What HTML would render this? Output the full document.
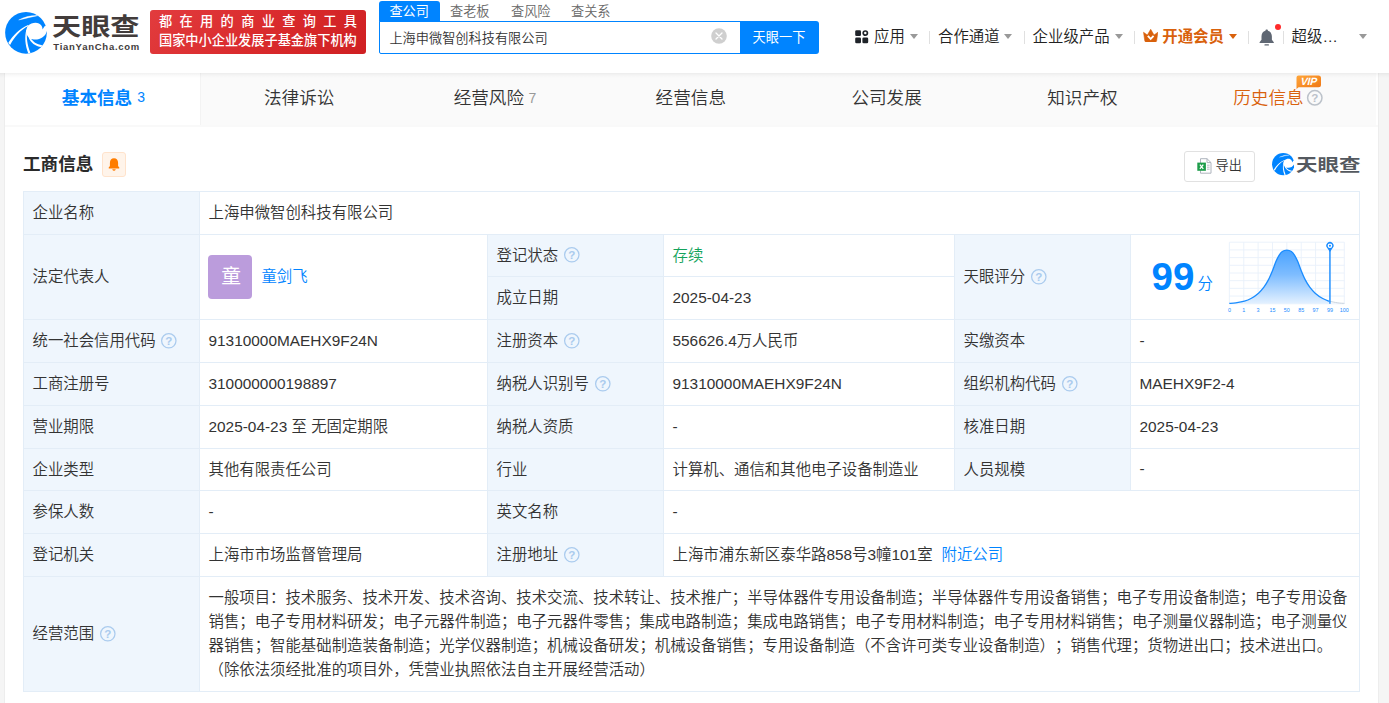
<!DOCTYPE html>
<html lang="zh-CN">
<head>
<meta charset="utf-8">
<title>上海申微智创科技有限公司 - 天眼查</title>
<style>
html,body{margin:0;padding:0}
body{width:1389px;height:703px;overflow:hidden;background:#f5f5f5;position:relative;font-family:"Liberation Sans","Noto Sans CJK SC",sans-serif;color:#333;font-size:15.4px;font-weight:350}
.a{position:absolute;display:block}
.t{white-space:nowrap;margin:0;text-spacing-trim:space-all}
b{font-weight:700}
.l{position:relative;top:-0.4px}
</style>
</head>
<body>

<div class="a " style="left:4px;top:73px;width:1373px;height:630px;background:#fff;border-left:1px solid #ededed;border-right:1px solid #ededed"></div>
<div class="a " style="left:0px;top:0px;width:1389px;height:73px;background:#fff;z-index:5"></div>
<div class="a " style="left:0px;top:73px;width:1389px;height:5px;background:linear-gradient(rgba(0,0,0,.055),rgba(0,0,0,.02) 50%,rgba(0,0,0,0));z-index:5"></div>
<div class="a" style="left:0;top:0;width:1389px;height:73px;z-index:6">
<svg class="a" style="left:4.95px;top:11.5px" width="42.1" height="42.1" viewBox="42 50 592 592"><circle cx="337" cy="343" r="293" fill="#0084ff"/><path d="M365,242 C420,192 520,182 556,245 C566,265 571,280 570,296 L598,250 L665,235 L665,324 L630,320 C612,400 520,452 430,434 C405,428 392,422 383,415 C345,385 335,330 345,290 C350,270 355,255 365,242 Z" fill="#fff"/><path d="M235,162 C320,116 420,96 502,101 C420,116 330,142 235,162 Z" fill="#fff" stroke="#fff" stroke-width="5" stroke-linejoin="round"/><path d="M88,486 C150,383 250,283 366,234 L370,248 C262,302 172,402 114,514 Z" fill="#fff"/><path d="M342,300 C316,400 323,512 370,634 L400,622 C352,510 342,400 354,300 Z" fill="#fff"/><path d="M374,405 C400,482 470,532 553,543 L564,516 C490,505 430,470 397,405 Z" fill="#fff"/></svg>
<div class="a t " style="left:52.3px;top:11.8px;font-size:24.2px;line-height:30px;height:30px;color:#423c3b;font-weight:700;transform:scaleX(1.206);transform-origin:0 50%;letter-spacing:0px">天眼查</div>
<div class="a t " style="left:53.3px;top:41.0px;font-size:9.5px;line-height:12px;height:12px;color:#423c3b;font-weight:700;letter-spacing:0.74px">TianYanCha.com</div>
<div class="a " style="left:150px;top:10px;width:216px;height:44px;background:linear-gradient(135deg,#e23c3e 0%,#d92a2c 55%,#cf1f22 100%);border-radius:3px"></div>
<div class="a t " style="left:159px;top:13.4px;font-size:13.2px;line-height:18px;height:18px;color:#fff;font-weight:500;letter-spacing:7.35px">都在用的商业查询工具</div>
<div class="a t " style="left:159px;top:31.8px;font-size:13.2px;line-height:18px;height:18px;color:#fff;font-weight:500;">国家中小企业发展子基金旗下机构</div>
<div class="a " style="left:379px;top:1px;width:61px;height:21px;background:#0084ff;border-radius:3px 3px 0 0"></div>
<div class="a t " style="left:389.4px;top:2.5px;font-size:13.2px;line-height:18px;height:18px;color:#fff;font-weight:400;">查公司</div>
<div class="a t " style="left:450px;top:2.5px;font-size:13.2px;line-height:18px;height:18px;color:#666;font-weight:350;">查老板</div>
<div class="a t " style="left:511px;top:2.5px;font-size:13.2px;line-height:18px;height:18px;color:#666;font-weight:350;">查风险</div>
<div class="a t " style="left:571px;top:2.5px;font-size:13.2px;line-height:18px;height:18px;color:#666;font-weight:350;">查关系</div>
<div class="a " style="left:379px;top:21px;width:362px;height:33px;box-sizing:border-box;border:1px solid #0084ff;background:#fff;border-radius:0 0 0 2px"></div>
<div class="a t " style="left:389.4px;top:29.5px;font-size:13.2px;line-height:18px;height:18px;color:#333;font-weight:350;">上海申微智创科技有限公司</div>
<svg class="a" style="left:710.8px;top:27.9px" width="16" height="16" viewBox="0 0 16 16"><circle cx="8" cy="8" r="7.8" fill="#cfcfcf"/><path d="M5,5 L11,11 M11,5 L5,11" stroke="#fff" stroke-width="1.3" stroke-linecap="round"/></svg>
<div class="a " style="left:740px;top:21px;width:79px;height:33px;background:#0084ff;border-radius:0 3px 3px 0"></div>
<div class="a t " style="left:752.6px;top:29.1px;font-size:13.2px;line-height:18px;height:18px;color:#fff;font-weight:400;">天眼一下</div>
<svg class="a" style="left:855px;top:30px" width="14" height="14" viewBox="0 0 14 14"><rect x="0.2" y="0.2" width="5.8" height="5.8" rx="1.3" fill="#1f2329"/><rect x="0.2" y="7.4" width="5.8" height="5.8" rx="1.3" fill="#1f2329"/><rect x="7.4" y="7.4" width="5.8" height="5.8" rx="1.3" fill="#1f2329"/><circle cx="10.3" cy="3.1" r="2.1" fill="none" stroke="#1f2329" stroke-width="1.7"/></svg>
<div class="a t " style="left:874px;top:25.25px;font-size:15.4px;line-height:23.1px;height:23.1px;color:#222;font-weight:350;">应用</div>
<svg class="a" style="left:910px;top:33.9px" width="8" height="5" viewBox="0 0 8 5"><path d="M0,0 H8 L4.0,5 Z" fill="#999"/></svg>
<div class="a " style="left:929px;top:31px;width:1px;height:13px;background:#e0e0e0"></div>
<div class="a t " style="left:938px;top:25.25px;font-size:15.4px;line-height:23.1px;height:23.1px;color:#222;font-weight:350;">合作通道</div>
<svg class="a" style="left:1004.4px;top:33.9px" width="8" height="5" viewBox="0 0 8 5"><path d="M0,0 H8 L4.0,5 Z" fill="#999"/></svg>
<div class="a " style="left:1024px;top:31px;width:1px;height:13px;background:#e0e0e0"></div>
<div class="a t " style="left:1032.6px;top:25.25px;font-size:15.4px;line-height:23.1px;height:23.1px;color:#222;font-weight:350;">企业级产品</div>
<svg class="a" style="left:1114.6px;top:33.9px" width="8" height="5" viewBox="0 0 8 5"><path d="M0,0 H8 L4.0,5 Z" fill="#999"/></svg>
<div class="a " style="left:1134px;top:31px;width:1px;height:13px;background:#e0e0e0"></div>
<svg class="a" style="left:1142.8px;top:29px" width="15.4" height="13.4" viewBox="0 0 16 14"><path d="M0.5,3.4 L4.5,6.3 L8,0.3 L11.5,6.3 L15.5,3.4 L14.2,12.2 Q14,13.6 12.7,13.6 H3.3 Q2,13.6 1.8,12.2 Z" fill="#d9610c" stroke="#d9610c" stroke-width="0.6" stroke-linejoin="round"/><path d="M5,7.2 L8,10.4 L11,7.2" fill="none" stroke="#fff" stroke-width="1.9"/></svg>
<div class="a t " style="left:1162.3px;top:25.25px;font-size:15.4px;line-height:23.1px;height:23.1px;color:#d9610c;font-weight:700;">开通会员</div>
<svg class="a" style="left:1229.3px;top:33.9px" width="8" height="5" viewBox="0 0 8 5"><path d="M0,0 H8 L4.0,5 Z" fill="#d9610c"/></svg>
<div class="a " style="left:1248px;top:31px;width:1px;height:13px;background:#e0e0e0"></div>
<svg class="a" style="left:1258.7px;top:28.8px" width="15.4" height="17.6" viewBox="0 0 16 19" preserveAspectRatio="none"><path d="M8,0.6 C8.8,0.6 9.3,1.2 9.3,2 C12,2.8 13.4,5.2 13.4,8 V11.6 L15.4,14.2 V15 H0.6 V14.2 L2.6,11.6 V8 C2.6,5.2 4,2.8 6.7,2 C6.7,1.2 7.2,0.6 8,0.6 Z" fill="#5f6773"/><rect x="5.6" y="16.4" width="4.8" height="1.5" rx="0.7" fill="#5f6773"/></svg>
<div class="a " style="left:1274.8px;top:24.3px;width:6.2px;height:6.2px;background:#ff2b2b;border-radius:50%"></div>
<div class="a " style="left:1283px;top:31px;width:1px;height:13px;background:#e0e0e0"></div>
<div class="a t " style="left:1291.6px;top:25.25px;font-size:15.4px;line-height:23.1px;height:23.1px;color:#222;font-weight:350;">超级…</div>
<svg class="a" style="left:1358.8px;top:33.9px" width="8" height="5" viewBox="0 0 8 5"><path d="M0,0 H8 L4.0,5 Z" fill="#999"/></svg>
</div>
<div class="a " style="left:5px;top:73px;width:1371px;height:52px;background:#fafafa"></div>
<div class="a " style="left:5px;top:125px;width:1373px;height:2px;background:#f9f9f9"></div>
<div class="a " style="left:5px;top:73px;width:196px;height:52px;background:#fff;border-right:1px solid #f3f3f3;box-sizing:border-box"></div>
<div class="a t" style="left:-46.599999999999994px;width:300px;text-align:center;top:85.2px;font-size:17.6px;line-height:26.4px;height:26.4px;color:#0084ff;font-weight:700;"><b>基本信息</b><span style="font-size:14px;font-weight:400;margin-left:5px;position:relative;top:-2.6px">3</span></div>
<div class="a t" style="left:149.20000000000005px;width:300px;text-align:center;top:85.2px;font-size:17.6px;line-height:26.4px;height:26.4px;color:#333;font-weight:350;">法律诉讼</div>
<div class="a t" style="left:345.0px;width:300px;text-align:center;top:85.2px;font-size:17.6px;line-height:26.4px;height:26.4px;color:#333;font-weight:350;">经营风险<span style="font-size:14px;margin-left:4.5px;color:#999;position:relative;top:-1px">7</span></div>
<div class="a t" style="left:540.8000000000001px;width:300px;text-align:center;top:85.2px;font-size:17.6px;line-height:26.4px;height:26.4px;color:#333;font-weight:350;">经营信息</div>
<div class="a t" style="left:736.6px;width:300px;text-align:center;top:85.2px;font-size:17.6px;line-height:26.4px;height:26.4px;color:#333;font-weight:350;">公司发展</div>
<div class="a t" style="left:932.4000000000001px;width:300px;text-align:center;top:85.2px;font-size:17.6px;line-height:26.4px;height:26.4px;color:#333;font-weight:350;">知识产权</div>
<div class="a t " style="left:1233.2px;top:85.2px;font-size:17.6px;line-height:26.4px;height:26.4px;color:#d9610c;font-weight:350;">历史信息</div>
<svg class="a" style="left:1306.4px;top:88.8px" width="17.6" height="17.6" viewBox="0 0 17.6 17.6"><circle cx="8.8" cy="8.8" r="7.2" fill="none" stroke="#bcc2ca" stroke-width="1.5"/><text x="8.8" y="12.9" font-size="11.6" font-weight="700" text-anchor="middle" fill="#bcc2ca" font-family="Liberation Sans, sans-serif">?</text></svg>
<svg class="a" style="left:1295.6px;top:74.5px;z-index:7" width="26" height="16" viewBox="0 0 26 16"><defs><linearGradient id="vg" x1="0" y1="0" x2="1" y2="1"><stop offset="0" stop-color="#ffa63a"/><stop offset="1" stop-color="#ee7413"/></linearGradient></defs><path d="M2.5,0.5 H22.5 Q25,0.5 25,3 V9.8 Q25,12.3 22.5,12.3 H2.6 L0.5,14 V2.5 Q0.5,0.5 2.5,0.5 Z" fill="url(#vg)"/><text x="14.6" y="10.1" font-size="10.4" font-weight="700" text-anchor="middle" fill="#fff" font-family="Liberation Sans, sans-serif" letter-spacing="-0.2" transform="skewX(-14)">VIP</text></svg>
<div class="a t " style="left:23px;top:150.5px;font-size:17.6px;line-height:26.4px;height:26.4px;color:#2a2a2a;font-weight:700;">工商信息</div>
<div class="a " style="left:102px;top:152px;width:24px;height:25px;box-sizing:border-box;border:1px solid #ffe3cc;background:#fff4ea;border-radius:3px"></div>
<svg class="a" style="left:107.8px;top:157.6px" width="12" height="13" viewBox="0 0 12 13"><path d="M6,0.3 C8.6,0.3 10.1,2.3 10.1,5 V8 L11.4,9.8 Q11.6,10.6 10.8,10.6 H1.2 Q0.4,10.6 0.6,9.8 L1.9,8 V5 C1.9,2.3 3.4,0.3 6,0.3 Z" fill="#ff7d00"/><path d="M4.2,11.2 H7.8 Q7.2,12.7 6,12.7 Q4.8,12.7 4.2,11.2 Z" fill="#ff7d00"/></svg>
<div class="a " style="left:1184px;top:151px;width:71px;height:31px;box-sizing:border-box;border:1px solid #e1e1e1;border-radius:3px;background:#fff"></div>
<svg class="a" style="left:1196.6px;top:157.9px" width="15" height="16" viewBox="0 0 15 16"><path d="M3.5,0.7 H10 L14,4.6 V15.2 H3.5 Z" fill="#fff" stroke="#aeb4bd" stroke-width="1"/><path d="M10,0.7 V4.6 H14" fill="none" stroke="#aeb4bd" stroke-width="1"/><path d="M10,7.2 H12.6 M10,9.2 H12.6 M10,11.2 H12.6" stroke="#aeb4bd" stroke-width="0.9"/><rect x="0.3" y="4.6" width="8.6" height="8.2" fill="#1e9d4b"/><path d="M2.9,6.6 L6.3,10.8 M6.3,6.6 L2.9,10.8" stroke="#fff" stroke-width="1.3"/></svg>
<div class="a t " style="left:1215.6px;top:157.1px;font-size:13.2px;line-height:18px;height:18px;color:#333;font-weight:350;">导出</div>
<svg class="a" style="left:1271.6px;top:153px" width="22.6" height="22.6" viewBox="42 50 592 592"><circle cx="337" cy="343" r="293" fill="#0084ff"/><path d="M365,242 C420,192 520,182 556,245 C566,265 571,280 570,296 L598,250 L665,235 L665,324 L630,320 C612,400 520,452 430,434 C405,428 392,422 383,415 C345,385 335,330 345,290 C350,270 355,255 365,242 Z" fill="#fff"/><path d="M235,162 C320,116 420,96 502,101 C420,116 330,142 235,162 Z" fill="#fff" stroke="#fff" stroke-width="5" stroke-linejoin="round"/><path d="M88,486 C150,383 250,283 366,234 L370,248 C262,302 172,402 114,514 Z" fill="#fff"/><path d="M342,300 C316,400 323,512 370,634 L400,622 C352,510 342,400 354,300 Z" fill="#fff"/><path d="M374,405 C400,482 470,532 553,543 L564,516 C490,505 430,470 397,405 Z" fill="#fff"/></svg>
<div class="a t " style="left:1296.2px;top:153.2px;font-size:17.4px;line-height:24px;height:24px;color:#54595f;font-weight:700;transform:scaleX(1.235);transform-origin:0 50%">天眼查</div>
<div class="a " style="left:24px;top:192px;width:175px;height:499px;background:#eff6fd"></div>
<div class="a " style="left:488px;top:235px;width:175px;height:341px;background:#eff6fd"></div>
<div class="a " style="left:955px;top:235px;width:175px;height:255px;background:#eff6fd"></div>
<div class="a " style="left:23px;top:191px;width:1337px;height:1px;background:#e3edf7"></div>
<div class="a " style="left:23px;top:234px;width:1337px;height:1px;background:#e3edf7"></div>
<div class="a " style="left:23px;top:319px;width:1337px;height:1px;background:#e3edf7"></div>
<div class="a " style="left:23px;top:362px;width:1337px;height:1px;background:#e3edf7"></div>
<div class="a " style="left:23px;top:405px;width:1337px;height:1px;background:#e3edf7"></div>
<div class="a " style="left:23px;top:448px;width:1337px;height:1px;background:#e3edf7"></div>
<div class="a " style="left:23px;top:490px;width:1337px;height:1px;background:#e3edf7"></div>
<div class="a " style="left:23px;top:533px;width:1337px;height:1px;background:#e3edf7"></div>
<div class="a " style="left:23px;top:576px;width:1337px;height:1px;background:#e3edf7"></div>
<div class="a " style="left:23px;top:691px;width:1337px;height:1px;background:#e3edf7"></div>
<div class="a " style="left:487px;top:276px;width:467px;height:1px;background:#e3edf7"></div>
<div class="a " style="left:23px;top:191px;width:1px;height:501px;background:#e3edf7"></div>
<div class="a " style="left:199px;top:191px;width:1px;height:501px;background:#e3edf7"></div>
<div class="a " style="left:1359px;top:191px;width:1px;height:501px;background:#e3edf7"></div>
<div class="a " style="left:487px;top:234px;width:1px;height:342px;background:#e3edf7"></div>
<div class="a " style="left:663px;top:234px;width:1px;height:342px;background:#e3edf7"></div>
<div class="a " style="left:954px;top:234px;width:1px;height:256px;background:#e3edf7"></div>
<div class="a " style="left:1130px;top:234px;width:1px;height:256px;background:#e3edf7"></div>
<div class="a t " style="left:32.5px;top:201.25px;font-size:15.4px;line-height:23.1px;height:23.1px;color:#333;font-weight:350;">企业名称</div>
<div class="a t " style="left:208.5px;top:201.25px;font-size:15.4px;line-height:23.1px;height:23.1px;color:#333;font-weight:350;">上海申微智创科技有限公司</div>
<div class="a t " style="left:32.5px;top:265.25px;font-size:15.4px;line-height:23.1px;height:23.1px;color:#333;font-weight:350;">法定代表人</div>
<div class="a " style="left:208px;top:255px;width:44px;height:44px;background:#bb9cdc;border-radius:4px"></div>
<div class="a t" style="left:209.1px;width:44px;text-align:center;top:261.95px;font-size:19.8px;line-height:29.7px;height:29.7px;color:#fff;font-weight:400;">童</div>
<div class="a t " style="left:261.4px;top:265.25px;font-size:15.4px;line-height:23.1px;height:23.1px;color:#0084ff;font-weight:350;">童剑飞</div>
<div class="a t " style="left:496.5px;top:243.55px;font-size:15.4px;line-height:23.1px;height:23.1px;color:#333;font-weight:350;">登记状态</div>
<svg class="a" style="left:562.7px;top:246.1px" width="17.6" height="17.6" viewBox="0 0 17.6 17.6"><circle cx="8.8" cy="8.8" r="7.2" fill="none" stroke="#aacbee" stroke-width="1.25"/><text x="8.8" y="12.9" font-size="11.6" font-weight="700" text-anchor="middle" fill="#aacbee" font-family="Liberation Sans, sans-serif">?</text></svg>
<div class="a t " style="left:672.5px;top:243.55px;font-size:15.4px;line-height:23.1px;height:23.1px;color:#14a35c;font-weight:350;">存续</div>
<div class="a t " style="left:496.5px;top:286.35px;font-size:15.4px;line-height:23.1px;height:23.1px;color:#333;font-weight:350;">成立日期</div>
<div class="a t " style="left:672.5px;top:286.35px;font-size:15.4px;line-height:23.1px;height:23.1px;color:#333;font-weight:350;"><span class="l">2025-04-23</span></div>
<div class="a t " style="left:963.5px;top:265.25px;font-size:15.4px;line-height:23.1px;height:23.1px;color:#333;font-weight:350;">天眼评分</div>
<svg class="a" style="left:1029.7px;top:267.8px" width="17.6" height="17.6" viewBox="0 0 17.6 17.6"><circle cx="8.8" cy="8.8" r="7.2" fill="none" stroke="#aacbee" stroke-width="1.25"/><text x="8.8" y="12.9" font-size="11.6" font-weight="700" text-anchor="middle" fill="#aacbee" font-family="Liberation Sans, sans-serif">?</text></svg>
<div class="a t " style="left:32.5px;top:329.25px;font-size:15.4px;line-height:23.1px;height:23.1px;color:#333;font-weight:350;">统一社会信用代码</div>
<svg class="a" style="left:160.29999999999998px;top:331.8px" width="17.6" height="17.6" viewBox="0 0 17.6 17.6"><circle cx="8.8" cy="8.8" r="7.2" fill="none" stroke="#aacbee" stroke-width="1.25"/><text x="8.8" y="12.9" font-size="11.6" font-weight="700" text-anchor="middle" fill="#aacbee" font-family="Liberation Sans, sans-serif">?</text></svg>
<div class="a t " style="left:208.5px;top:329.25px;font-size:15.4px;line-height:23.1px;height:23.1px;color:#333;font-weight:350;"><span class="l">91310000MAEHX9F24N</span></div>
<div class="a t " style="left:496.5px;top:329.25px;font-size:15.4px;line-height:23.1px;height:23.1px;color:#333;font-weight:350;">注册资本</div>
<svg class="a" style="left:562.7px;top:331.8px" width="17.6" height="17.6" viewBox="0 0 17.6 17.6"><circle cx="8.8" cy="8.8" r="7.2" fill="none" stroke="#aacbee" stroke-width="1.25"/><text x="8.8" y="12.9" font-size="11.6" font-weight="700" text-anchor="middle" fill="#aacbee" font-family="Liberation Sans, sans-serif">?</text></svg>
<div class="a t " style="left:672.5px;top:329.25px;font-size:15.4px;line-height:23.1px;height:23.1px;color:#333;font-weight:350;"><span class="l">556626.4</span>万人民币</div>
<div class="a t " style="left:963.5px;top:329.25px;font-size:15.4px;line-height:23.1px;height:23.1px;color:#333;font-weight:350;">实缴资本</div>
<div class="a t " style="left:1139.5px;top:329.25px;font-size:15.4px;line-height:23.1px;height:23.1px;color:#333;font-weight:350;"><span class="l">-</span></div>
<div class="a t " style="left:32.5px;top:372.25px;font-size:15.4px;line-height:23.1px;height:23.1px;color:#333;font-weight:350;">工商注册号</div>
<div class="a t " style="left:208.5px;top:372.25px;font-size:15.4px;line-height:23.1px;height:23.1px;color:#333;font-weight:350;"><span class="l">310000000198897</span></div>
<div class="a t " style="left:496.5px;top:372.25px;font-size:15.4px;line-height:23.1px;height:23.1px;color:#333;font-weight:350;">纳税人识别号</div>
<svg class="a" style="left:593.5px;top:374.8px" width="17.6" height="17.6" viewBox="0 0 17.6 17.6"><circle cx="8.8" cy="8.8" r="7.2" fill="none" stroke="#aacbee" stroke-width="1.25"/><text x="8.8" y="12.9" font-size="11.6" font-weight="700" text-anchor="middle" fill="#aacbee" font-family="Liberation Sans, sans-serif">?</text></svg>
<div class="a t " style="left:672.5px;top:372.25px;font-size:15.4px;line-height:23.1px;height:23.1px;color:#333;font-weight:350;"><span class="l">91310000MAEHX9F24N</span></div>
<div class="a t " style="left:963.5px;top:372.25px;font-size:15.4px;line-height:23.1px;height:23.1px;color:#333;font-weight:350;">组织机构代码</div>
<svg class="a" style="left:1060.5000000000002px;top:374.8px" width="17.6" height="17.6" viewBox="0 0 17.6 17.6"><circle cx="8.8" cy="8.8" r="7.2" fill="none" stroke="#aacbee" stroke-width="1.25"/><text x="8.8" y="12.9" font-size="11.6" font-weight="700" text-anchor="middle" fill="#aacbee" font-family="Liberation Sans, sans-serif">?</text></svg>
<div class="a t " style="left:1139.5px;top:372.25px;font-size:15.4px;line-height:23.1px;height:23.1px;color:#333;font-weight:350;"><span class="l">MAEHX9F2-4</span></div>
<div class="a t " style="left:32.5px;top:415.25px;font-size:15.4px;line-height:23.1px;height:23.1px;color:#333;font-weight:350;">营业期限</div>
<div class="a t " style="left:208.5px;top:415.25px;font-size:15.4px;line-height:23.1px;height:23.1px;color:#333;font-weight:350;"><span class="l">2025-04-23</span> 至 无固定期限</div>
<div class="a t " style="left:496.5px;top:415.25px;font-size:15.4px;line-height:23.1px;height:23.1px;color:#333;font-weight:350;">纳税人资质</div>
<div class="a t " style="left:672.5px;top:415.25px;font-size:15.4px;line-height:23.1px;height:23.1px;color:#333;font-weight:350;"><span class="l">-</span></div>
<div class="a t " style="left:963.5px;top:415.25px;font-size:15.4px;line-height:23.1px;height:23.1px;color:#333;font-weight:350;">核准日期</div>
<div class="a t " style="left:1139.5px;top:415.25px;font-size:15.4px;line-height:23.1px;height:23.1px;color:#333;font-weight:350;"><span class="l">2025-04-23</span></div>
<div class="a t " style="left:32.5px;top:457.75px;font-size:15.4px;line-height:23.1px;height:23.1px;color:#333;font-weight:350;">企业类型</div>
<div class="a t " style="left:208.5px;top:457.75px;font-size:15.4px;line-height:23.1px;height:23.1px;color:#333;font-weight:350;">其他有限责任公司</div>
<div class="a t " style="left:496.5px;top:457.75px;font-size:15.4px;line-height:23.1px;height:23.1px;color:#333;font-weight:350;">行业</div>
<div class="a t " style="left:672.5px;top:457.75px;font-size:15.4px;line-height:23.1px;height:23.1px;color:#333;font-weight:350;">计算机、通信和其他电子设备制造业</div>
<div class="a t " style="left:963.5px;top:457.75px;font-size:15.4px;line-height:23.1px;height:23.1px;color:#333;font-weight:350;">人员规模</div>
<div class="a t " style="left:1139.5px;top:457.75px;font-size:15.4px;line-height:23.1px;height:23.1px;color:#333;font-weight:350;"><span class="l">-</span></div>
<div class="a t " style="left:32.5px;top:500.25px;font-size:15.4px;line-height:23.1px;height:23.1px;color:#333;font-weight:350;">参保人数</div>
<div class="a t " style="left:208.5px;top:500.25px;font-size:15.4px;line-height:23.1px;height:23.1px;color:#333;font-weight:350;"><span class="l">-</span></div>
<div class="a t " style="left:496.5px;top:500.25px;font-size:15.4px;line-height:23.1px;height:23.1px;color:#333;font-weight:350;">英文名称</div>
<div class="a t " style="left:672.5px;top:500.25px;font-size:15.4px;line-height:23.1px;height:23.1px;color:#333;font-weight:350;"><span class="l">-</span></div>
<div class="a t " style="left:32.5px;top:543.25px;font-size:15.4px;line-height:23.1px;height:23.1px;color:#333;font-weight:350;">登记机关</div>
<div class="a t " style="left:208.5px;top:543.25px;font-size:15.4px;line-height:23.1px;height:23.1px;color:#333;font-weight:350;">上海市市场监督管理局</div>
<div class="a t " style="left:496.5px;top:543.25px;font-size:15.4px;line-height:23.1px;height:23.1px;color:#333;font-weight:350;">注册地址</div>
<svg class="a" style="left:562.7px;top:545.8px" width="17.6" height="17.6" viewBox="0 0 17.6 17.6"><circle cx="8.8" cy="8.8" r="7.2" fill="none" stroke="#aacbee" stroke-width="1.25"/><text x="8.8" y="12.9" font-size="11.6" font-weight="700" text-anchor="middle" fill="#aacbee" font-family="Liberation Sans, sans-serif">?</text></svg>
<div class="a t " style="left:672.5px;top:543.25px;font-size:15.4px;line-height:23.1px;height:23.1px;color:#333;font-weight:350;">上海市浦东新区泰华路<span class="l">858</span>号<span class="l">3</span>幢<span class="l">101</span>室<span style="color:#0084ff;margin-left:9px">附近公司</span></div>
<div class="a t " style="left:32.5px;top:622.25px;font-size:15.4px;line-height:23.1px;height:23.1px;color:#333;font-weight:350;">经营范围</div>
<svg class="a" style="left:98.7px;top:624.8px" width="17.6" height="17.6" viewBox="0 0 17.6 17.6"><circle cx="8.8" cy="8.8" r="7.2" fill="none" stroke="#aacbee" stroke-width="1.25"/><text x="8.8" y="12.9" font-size="11.6" font-weight="700" text-anchor="middle" fill="#aacbee" font-family="Liberation Sans, sans-serif">?</text></svg>
<div class="a t " style="left:208.5px;top:585.6px;font-size:15.4px;line-height:24px;height:24px;color:#333;font-weight:350;">一般项目：技术服务、技术开发、技术咨询、技术交流、技术转让、技术推广；半导体器件专用设备制造；半导体器件专用设备销售；电子专用设备制造；电子专用设备</div>
<div class="a t " style="left:208.5px;top:609.6px;font-size:15.4px;line-height:24px;height:24px;color:#333;font-weight:350;">销售；电子专用材料研发；电子元器件制造；电子元器件零售；集成电路制造；集成电路销售；电子专用材料制造；电子专用材料销售；电子测量仪器制造；电子测量仪</div>
<div class="a t " style="left:208.5px;top:633.6px;font-size:15.4px;line-height:24px;height:24px;color:#333;font-weight:350;">器销售；智能基础制造装备制造；光学仪器制造；机械设备研发；机械设备销售；专用设备制造（不含许可类专业设备制造）；销售代理；货物进出口；技术进出口。</div>
<div class="a t " style="left:208.5px;top:657.6px;font-size:15.4px;line-height:24px;height:24px;color:#333;font-weight:350;">（除依法须经批准的项目外，凭营业执照依法自主开展经营活动）</div>
<div class="a t " style="left:1151.6px;top:254.8px;font-size:38.5px;line-height:44px;height:44px;color:#0084ff;font-weight:700;">99</div>
<div class="a t " style="left:1197.4px;top:272.05px;font-size:15.4px;line-height:23.1px;height:23.1px;color:#0084ff;font-weight:350;">分</div>
<svg class="a" style="left:1225px;top:238px" width="124" height="76" viewBox="1225 238 124 76"><defs><linearGradient id="cg" x1="0" y1="0" x2="0" y2="1"><stop offset="0" stop-color="#4aa3ff"/><stop offset="0.45" stop-color="#7dbcff"/><stop offset="1" stop-color="#e4f1ff"/></linearGradient></defs><path d="M1229.40,242.2 V303.8" stroke="#e9f1fa" stroke-width="0.9"/><path d="M1243.76,242.2 V303.8" stroke="#e9f1fa" stroke-width="0.9"/><path d="M1258.12,242.2 V303.8" stroke="#e9f1fa" stroke-width="0.9"/><path d="M1272.49,242.2 V303.8" stroke="#e9f1fa" stroke-width="0.9"/><path d="M1286.85,242.2 V303.8" stroke="#e9f1fa" stroke-width="0.9"/><path d="M1301.21,242.2 V303.8" stroke="#e9f1fa" stroke-width="0.9"/><path d="M1315.58,242.2 V303.8" stroke="#e9f1fa" stroke-width="0.9"/><path d="M1329.94,242.2 V303.8" stroke="#e9f1fa" stroke-width="0.9"/><path d="M1344.30,242.2 V303.8" stroke="#e9f1fa" stroke-width="0.9"/><path d="M1229.4,242.20 H1344.3" stroke="#e9f1fa" stroke-width="0.9"/><path d="M1229.4,249.90 H1344.3" stroke="#e9f1fa" stroke-width="0.9"/><path d="M1229.4,257.60 H1344.3" stroke="#e9f1fa" stroke-width="0.9"/><path d="M1229.4,265.30 H1344.3" stroke="#e9f1fa" stroke-width="0.9"/><path d="M1229.4,273.00 H1344.3" stroke="#e9f1fa" stroke-width="0.9"/><path d="M1229.4,280.70 H1344.3" stroke="#e9f1fa" stroke-width="0.9"/><path d="M1229.4,288.40 H1344.3" stroke="#e9f1fa" stroke-width="0.9"/><path d="M1229.4,296.10 H1344.3" stroke="#e9f1fa" stroke-width="0.9"/><path d="M1229.4,303.80 H1344.3" stroke="#e9f1fa" stroke-width="0.9"/><path d="M1229.32,303.41 C1230.41,303.32 1233.29,303.23 1235.81,302.86 C1238.33,302.50 1241.94,301.96 1244.46,301.24 C1246.98,300.52 1248.60,299.89 1250.95,298.54 C1253.29,297.19 1256.35,295.03 1258.51,293.14 C1260.68,291.24 1262.30,289.35 1263.92,287.19 C1265.54,285.03 1266.80,282.95 1268.24,280.16 C1269.68,277.37 1271.31,273.50 1272.57,270.43 C1273.83,267.37 1274.73,264.31 1275.81,261.78 C1276.89,259.26 1277.97,257.01 1279.05,255.30 C1280.14,253.59 1281.00,252.38 1282.30,251.51 C1283.59,250.65 1285.32,250.11 1286.84,250.11 C1288.35,250.11 1290.08,250.65 1291.38,251.51 C1292.68,252.38 1293.54,253.59 1294.62,255.30 C1295.70,257.01 1296.78,259.26 1297.86,261.78 C1298.95,264.31 1299.85,267.37 1301.11,270.43 C1302.37,273.50 1303.99,277.37 1305.43,280.16 C1306.87,282.95 1308.14,285.03 1309.76,287.19 C1311.38,289.35 1313.00,291.24 1315.16,293.14 C1317.32,295.03 1320.39,297.19 1322.73,298.54 C1325.07,299.89 1328.14,300.79 1329.22,301.24 L1329.22,303.8 L1229.4,303.8 Z" fill="url(#cg)"/><path d="M1329.22,301.24 C1330.66,301.51 1335.34,302.50 1337.86,302.86 C1340.39,303.23 1343.27,303.32 1344.35,303.41" fill="none" stroke="#c9d3de" stroke-width="1"/><path d="M1229.32,303.41 C1230.41,303.32 1233.29,303.23 1235.81,302.86 C1238.33,302.50 1241.94,301.96 1244.46,301.24 C1246.98,300.52 1248.60,299.89 1250.95,298.54 C1253.29,297.19 1256.35,295.03 1258.51,293.14 C1260.68,291.24 1262.30,289.35 1263.92,287.19 C1265.54,285.03 1266.80,282.95 1268.24,280.16 C1269.68,277.37 1271.31,273.50 1272.57,270.43 C1273.83,267.37 1274.73,264.31 1275.81,261.78 C1276.89,259.26 1277.97,257.01 1279.05,255.30 C1280.14,253.59 1281.00,252.38 1282.30,251.51 C1283.59,250.65 1285.32,250.11 1286.84,250.11 C1288.35,250.11 1290.08,250.65 1291.38,251.51 C1292.68,252.38 1293.54,253.59 1294.62,255.30 C1295.70,257.01 1296.78,259.26 1297.86,261.78 C1298.95,264.31 1299.85,267.37 1301.11,270.43 C1302.37,273.50 1303.99,277.37 1305.43,280.16 C1306.87,282.95 1308.14,285.03 1309.76,287.19 C1311.38,289.35 1313.00,291.24 1315.16,293.14 C1317.32,295.03 1320.39,297.19 1322.73,298.54 C1325.07,299.89 1328.14,300.79 1329.22,301.24" fill="none" stroke="#1a8cff" stroke-width="1.3"/><path d="M1329.94,303.8 V248" stroke="#1a8cff" stroke-width="1.4"/><path d="M1329.94,252 L1327.24,247.9 A3.6,3.6 0 1 1 1332.64,247.9 Z" fill="#1a8cff"/><circle cx="1329.94" cy="245.7" r="2.3" fill="#fff"/><circle cx="1329.94" cy="245.7" r="1.05" fill="#1a8cff"/><text x="1229.40" y="311.8" font-size="5.4" text-anchor="middle" fill="#1a8cff" font-family="Liberation Sans, sans-serif">0</text><text x="1243.76" y="311.8" font-size="5.4" text-anchor="middle" fill="#1a8cff" font-family="Liberation Sans, sans-serif">1</text><text x="1258.12" y="311.8" font-size="5.4" text-anchor="middle" fill="#1a8cff" font-family="Liberation Sans, sans-serif">3</text><text x="1272.49" y="311.8" font-size="5.4" text-anchor="middle" fill="#1a8cff" font-family="Liberation Sans, sans-serif">15</text><text x="1286.85" y="311.8" font-size="5.4" text-anchor="middle" fill="#1a8cff" font-family="Liberation Sans, sans-serif">50</text><text x="1301.21" y="311.8" font-size="5.4" text-anchor="middle" fill="#1a8cff" font-family="Liberation Sans, sans-serif">85</text><text x="1315.58" y="311.8" font-size="5.4" text-anchor="middle" fill="#1a8cff" font-family="Liberation Sans, sans-serif">97</text><text x="1329.94" y="311.8" font-size="5.4" text-anchor="middle" fill="#1a8cff" font-family="Liberation Sans, sans-serif">99</text><text x="1344.30" y="311.8" font-size="5.4" text-anchor="middle" fill="#1a8cff" font-family="Liberation Sans, sans-serif">100</text></svg>
</body>
</html>
